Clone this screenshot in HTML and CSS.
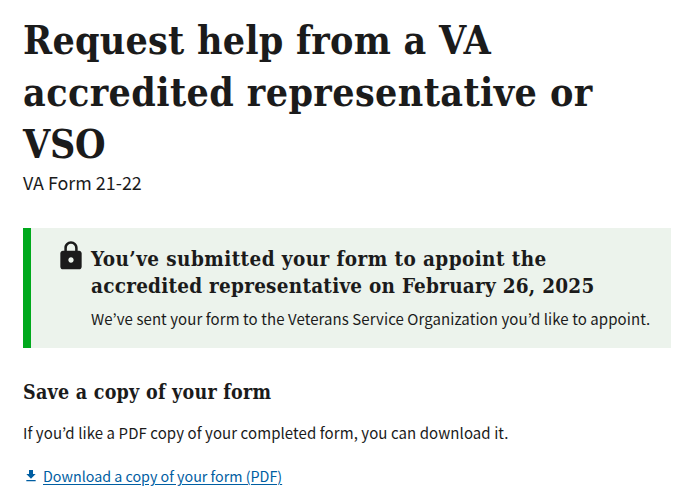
FILE: index.html
```html
<!DOCTYPE html>
<html lang="en">
<head>
<meta charset="utf-8">
<title>Request help from a VA accredited representative or VSO</title>
<link rel="stylesheet" href="styles.css">
</head>
<body>
<main class="page">
  <h1 class="title"><span class="line t1">Request help from a VA</span> <span class="line t2">accredited representative or</span> <span class="line t3">VSO</span></h1>
  <p class="subtitle"><span class="line">VA Form 21-22</span></p>
  <section class="alert">
    <svg class="lock" viewBox="0 0 24 24" aria-hidden="true"><path d="M18 8h-1V6c0-2.76-2.24-5-5-5S7 3.240 7 6v2H6c-1.100 0-2 .9-2 2v10c0 1.100.9 2 2 2h12c1.100 0 2-.9 2-2V10c0-1.100-.9-2-2-2zm-6 9c-1.100 0-2-.9-2-2s.9-2 2-2 2 .9 2 2-.9 2-2 2zm3.100-9H8.900V6c0-1.710 1.390-3.100 3.100-3.100s3.100 1.390 3.100 3.100v2z"/></svg>
    <div class="alert-body">
      <h2 class="alert-title"><span class="line a1">You’ve submitted your form to appoint the</span> <span class="line a2">accredited representative on February 26, 2025</span></h2>
      <p class="alert-text"><span class="line">We’ve sent your form to the Veterans Service Organization you’d like to appoint.</span></p>
    </div>
  </section>
  <h2 class="save-title"><span class="line">Save a copy of your form</span></h2>
  <p class="save-text"><span class="line">If you’d like a PDF copy of your completed form, you can download it.</span></p>
  <a class="download" href="#"><svg class="arrow" viewBox="0 0 24 24" aria-hidden="true"><path d="M19 9h-4V3H9v6H5l7 7 7-7zM5 18v2h14v-2H5z"/></svg><span class="line link-text">Download a copy of your form (PDF)</span></a>
</main>
</body>
</html>
```
FILE: styles.css
```css
* { box-sizing: border-box; }
body { margin: 0; background: #fff; color: #1b1b1b; font-family: "Noto Sans CJK KR", "Noto Sans", sans-serif; font-size: 15px; }
h1, h2, p { margin: 0; }
.page { padding: 14px 17px 0 23px; }
.line { display: block; width: max-content; white-space: nowrap; }
.title, .alert-title, .save-title { font-family: "DejaVu Serif Condensed", "DejaVu Serif", serif; font-stretch: condensed; font-weight: 700; }
.title { font-size: 39px; line-height: 52px; }
.t1 { letter-spacing: 0.24px; }
.t2 { letter-spacing: 0.4px; }
.t3 { letter-spacing: -0.3px; }
.subtitle { margin-top: -1px; font-size: 17.9px; line-height: 26px; }
.alert { display: flex; margin-top: 33px; height: 120px; padding: 12px 16px 0 28px; background: #ecf3ec; border-left: 8px solid #00a91c; }
.lock { width: 32px; height: 32px; margin-left: -4px; margin-right: 4px; flex: none; fill: #1b1b1b; }
.alert-body { padding-top: 6px; }
.alert-title { font-size: 20.5px; line-height: 27px; }
.a1 { letter-spacing: 0.42px; }
.a2 { letter-spacing: 0.25px; }
.alert-text { margin-top: 6px; line-height: 26px; letter-spacing: 0.08px; }
.save-title { margin-top: 31px; font-size: 19.5px; line-height: 28px; letter-spacing: 0.25px; }
.save-text { margin-top: 13px; line-height: 26px; letter-spacing: 0.08px; }
.download { display: flex; align-items: center; margin-top: 17px; color: #005ea2; font-size: 14.3px; line-height: 26px; text-underline-offset: 2px; }
.arrow { width: 16px; height: 16px; margin-right: 4px; fill: currentColor; }
```
